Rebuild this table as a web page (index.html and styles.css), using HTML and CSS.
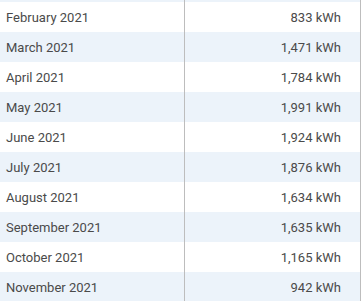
FILE: index.html
```html
<!DOCTYPE html>
<html>
<head>
<meta charset="utf-8">
<link rel="stylesheet" href="styles.css">
</head>
<body>
<div class="viewport">
  <div class="table">
    <div class="row alt stub"><div class="cell month"></div><div class="cell value"></div></div>
    <div class="row"><div class="cell month">February 2021</div><div class="cell value">833 kWh</div></div>
    <div class="row alt"><div class="cell month">March 2021</div><div class="cell value">1,471 kWh</div></div>
    <div class="row"><div class="cell month">April 2021</div><div class="cell value">1,784 kWh</div></div>
    <div class="row alt"><div class="cell month">May 2021</div><div class="cell value">1,991 kWh</div></div>
    <div class="row"><div class="cell month">June 2021</div><div class="cell value">1,924 kWh</div></div>
    <div class="row alt"><div class="cell month">July 2021</div><div class="cell value">1,876 kWh</div></div>
    <div class="row"><div class="cell month">August 2021</div><div class="cell value">1,634 kWh</div></div>
    <div class="row alt"><div class="cell month">September 2021</div><div class="cell value">1,635 kWh</div></div>
    <div class="row"><div class="cell month">October 2021</div><div class="cell value">1,165 kWh</div></div>
    <div class="row alt"><div class="cell month">November 2021</div><div class="cell value">942 kWh</div></div>
  </div>
</div>
</body>
</html>
```
FILE: styles.css
```css
html, body {
  margin: 0;
  padding: 0;
  background: #ffffff;
}
.viewport {
  width: 362px;
  height: 301px;
  overflow: hidden;
}
.table {
  width: 361px;
  font-family: Roboto, "Liberation Sans", sans-serif;
  font-size: 13px;
  color: #4a4a4a;
}
.row {
  display: grid;
  grid-template-columns: 185px 176px;
  height: 30px;
  background: #ffffff;
}
.row.alt {
  background: #ecf3fa;
}
.row.stub {
  height: 2px;
}
.cell {
  display: flex;
  align-items: center;
  height: 100%;
}
.month {
  padding-left: 6px;
  border-right: 1px solid #bdbdbd;
}
.value {
  justify-content: flex-end;
  padding-right: 19px;
  border-right: 1px solid #bdbdbd;
}
```
